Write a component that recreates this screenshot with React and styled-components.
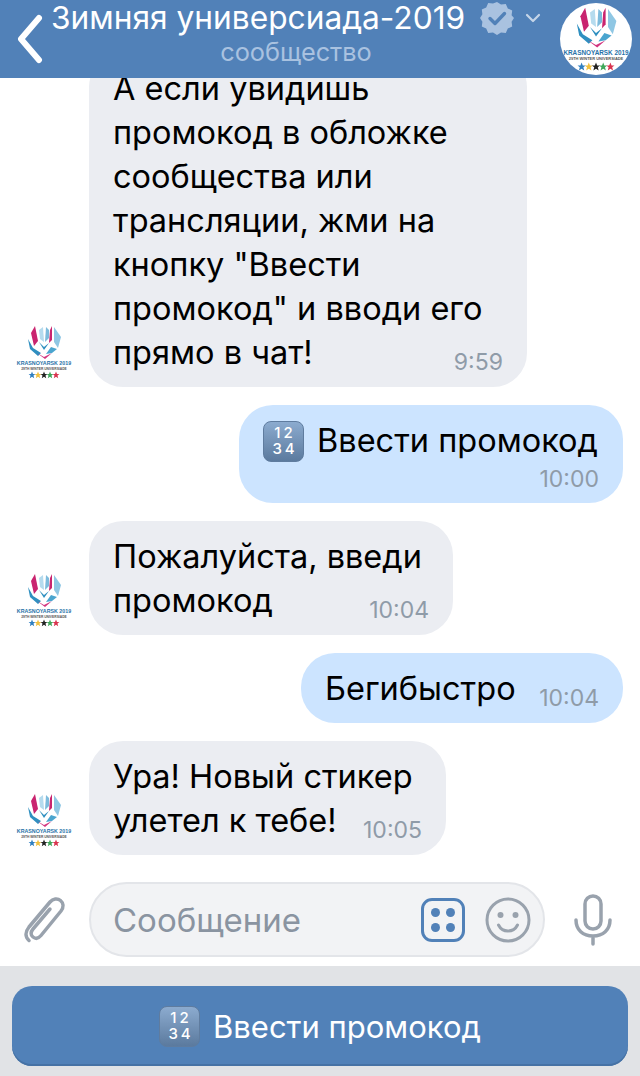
import React from "react";
import styled, { createGlobalStyle } from "styled-components";
import { ChevronDown } from "lucide-react";

const GlobalStyle = createGlobalStyle`
  html, body { margin: 0; padding: 0; background: #fff; }
  body { font-family: Inter, "Liberation Sans", Arial, sans-serif; }
`;

const Screen = styled.div`
  width: 640px;
  height: 1076px;
  display: flex;
  flex-direction: column;
  overflow: hidden;
  background: #fff;
`;

const Header = styled.header`
  height: 78px;
  flex: none;
  display: flex;
  align-items: center;
  background: #5181b8;
  color: #fff;
`;

const BackButton = styled.div`
  width: 51px;
  flex: none;
  display: flex;
  justify-content: center;
  padding-left: 9px;
  box-sizing: border-box;
`;

const TitleBlock = styled.div`
  width: 490px;
  height: 78px;
  flex: none;
  display: flex;
  flex-direction: column;
  align-items: center;
`;

const TitleRow = styled.div`
  align-self: flex-start;
  display: flex;
  align-items: center;
  height: 36px;
`;

const Title = styled.div`
  font-size: 31.7px;
  line-height: 36px;
  white-space: nowrap;
`;

const Subtitle = styled.div`
  font-size: 25.3px;
  line-height: 28px;
  margin-top: 2px;
  color: #a9c2e0;
`;

const HeaderLogo = styled.div`
  width: 72px;
  height: 72px;
  flex: none;
  border-radius: 50%;
  background: #fff;
  overflow: hidden;
  margin-left: 19px;
`;

const MessageList = styled.main`
  flex: 1;
  min-height: 0;
  display: flex;
  flex-direction: column;
  justify-content: flex-end;
  gap: 18px;
  padding-bottom: 27px;
  overflow: hidden;
`;

const Row = styled.div`
  flex: none;
  display: flex;
  align-items: flex-end;
  justify-content: ${({ $out }) => ($out ? "flex-end" : "flex-start")};
  padding: ${({ $out }) => ($out ? "0 17px 0 0" : "0 0 0 14px")};
`;

const Avatar = styled.div`
  width: 60px;
  height: 60px;
  flex: none;
  margin: 0 15px 5px 0;
`;

const Bubble = styled.div`
  width: ${({ $width }) => $width}px;
  box-sizing: border-box;
  padding: 14px 24px 12px;
  border-radius: 34px;
  background: ${({ $out }) => ($out ? "#cce4ff" : "#ebedf2")};
  color: #000;
  font-size: 32.5px;
  line-height: 44px;
`;

const Line = styled.div`
  display: flex;
  align-items: center;
  white-space: nowrap;
  height: 44px;
`;

const LastLine = styled(Line)`
  justify-content: space-between;
`;

const Time = styled.span`
  font-size: 23px;
  line-height: 26px;
  color: #8f9ba8;
  margin-top: 18px;
`;

const TimeLine = styled.div`
  text-align: right;
  height: 28px;
  padding-top: 2px;
  box-sizing: border-box;
  line-height: 28px;
  font-size: 23px;
  color: #8f9ba8;
`;

const Keycap = styled.span`
  width: 41px;
  height: 41px;
  flex: none;
  display: inline-flex;
  flex-direction: column;
  align-items: center;
  justify-content: center;
  gap: 2px;
  box-sizing: border-box;
  margin-right: 13px;
  border-radius: 8px;
  border: 1px solid #5f7c9f;
  background: linear-gradient(180deg, #8cabcf 0%, #5b7a9e 100%);
  color: #fff;
  font-size: 15px;
  line-height: 14px;
  font-weight: 500;
  letter-spacing: 3px;
  text-indent: 3px;
`;

const KeycapRow = styled.span`
  display: block;
  height: 14px;
`;

const Composer = styled.div`
  height: 84px;
  flex: none;
  display: flex;
  align-items: flex-start;
`;

const IconSlot = styled.div`
  width: ${({ $width }) => $width}px;
  height: 75px;
  flex: none;
  display: flex;
  align-items: center;
  justify-content: center;
`;

const InputField = styled.div`
  width: 456px;
  height: 75px;
  box-sizing: border-box;
  flex: none;
  display: flex;
  align-items: center;
  padding: 0 12px 0 22px;
  border: 2px solid #e3e5e9;
  border-radius: 38px;
  background: #f2f3f5;
`;

const Placeholder = styled.div`
  flex: 1;
  font-size: 33px;
  color: #8a94a1;
`;

const AppsButton = styled.div`
  width: 44px;
  height: 44px;
  margin-right: 20px;
  flex: none;
  display: grid;
  grid-template-columns: 9px 9px;
  gap: 6px;
  place-content: center;
  box-sizing: border-box;
  border: 3px solid #5181b8;
  border-radius: 11px;
`;

const AppsDot = styled.span`
  width: 9px;
  height: 9px;
  border-radius: 50%;
  background: #5181b8;
`;

const KeyboardPanel = styled.div`
  height: 110px;
  flex: none;
  box-sizing: border-box;
  padding: 20px 12px 10px;
  background: #e1e3e6;
`;

const KeyboardButton = styled.div`
  height: 80px;
  display: flex;
  align-items: center;
  justify-content: center;
  border-radius: 20px;
  background: #5181b8;
  box-shadow: inset 0 -2px 0 #4672a5;
  color: #fff;
  font-size: 31px;
`;

const BackIcon = () => (
  <svg width="26" height="50" viewBox="0 0 26 50" fill="none" stroke="#fff" strokeWidth="6" strokeLinecap="round" strokeLinejoin="round">
    <path d="M22 4L4 25l18 21" />
  </svg>
);

const VerifiedBadge = () => (
  <svg width="34" height="34" viewBox="0 0 34 34" style={{ marginLeft: 15 }}>
    <path
      fill="#a9c2e0"
      d="M17 1l4 2.600 4.800-.6 2 4.400 4.400 2-.6 4.800L34 17l-2.400 3.800.6 4.800-4.400 2-2 4.400-4.800-.6L17 34l-4-2.600-4.800.6-2-4.400-4.400-2 .6-4.800L0 17l2.400-3.800-.6-4.800 4.400-2 2-4.400 4.800.6z"
    />
    <path d="M10 17.500l5 5 9.500-10" fill="none" stroke="#5181b8" strokeWidth="3.400" strokeLinecap="round" strokeLinejoin="round" />
  </svg>
);

const starColors = ["#2f7fc1", "#f0c040", "#222", "#3fa85a", "#d9344f"];

const Star = ({ x, fill }) => (
  <polygon
    fill={fill}
    transform={`translate(${x} 53)`}
    points="0,-3.400 1,-1 3.400,-1 1.500,0.600 2.200,3.200 0,1.700 -2.200,3.200 -1.500,0.600 -3.400,-1 -1,-1"
  />
);

const UniversiadeLogo = () => (
  <svg width="100%" height="100%" viewBox="0 0 60 60">
    <polygon fill="#c9246f" points="17,11 21,4 24,19 20,24" />
    <polygon fill="#b5dbee" points="25,8 29,5 30,20 26,17" />
    <polygon fill="#7dbbdc" points="31,20 32,5 35,8 35,16" />
    <polygon fill="#c9246f" points="36,8 38,4 38,18 35,21" />
    <polygon fill="#8fc7e4" points="40,5 47,15 44,26 40,20" />
    <polygon fill="#2f8fc0" points="14,17 19,26 27,31 24,34 16,27" />
    <polygon fill="#d2367f" points="23,31 30,35 38,31 31,37" />
    <polygon fill="#4aa5cf" points="37,25 43,27 38,31 32,32" />
    <polygon fill="#2f8fc0" points="25,20 30,25 35,21 30,28" />
    <text x="30" y="43" textAnchor="middle" fontFamily="Liberation Sans" fontWeight="700" fontSize="5.300" fill="#2872a8">
      KRASNOYARSK 2019
    </text>
    <text x="30" y="47.500" textAnchor="middle" fontFamily="Liberation Sans" fontWeight="700" fontSize="3.300" fill="#555">
      29TH WINTER UNIVERSIADE
    </text>
    {starColors.map((c, i) => (
      <Star key={c} x={18 + i * 6} fill={c} />
    ))}
  </svg>
);

const PaperclipIcon = () => (
  <svg width="44" height="50" viewBox="0 0 44 50" fill="none" stroke="#99a2ad" strokeWidth="3.500" strokeLinecap="round" strokeLinejoin="round">
    <path d="M27 14L10 34c-2.500 3-2.500 6 0 8s5.500 1.500 8-1.500L38 16c3-4 2.500-8-.5-10.500S30 3.500 27 7L6 32c-4 5-4 10 0 13.500" />
  </svg>
);

const SmileIcon = () => (
  <svg width="46" height="46" viewBox="0 0 46 46" fill="none" stroke="#99a2ad" strokeWidth="3" strokeLinecap="round">
    <circle cx="23" cy="23" r="21" />
    <circle cx="15.500" cy="18" r="3" fill="#99a2ad" stroke="none" />
    <circle cx="30.500" cy="18" r="3" fill="#99a2ad" stroke="none" />
    <path d="M13.500 28c2 4 5.500 6 9.500 6s7.500-2 9.500-6" />
  </svg>
);

const MicIcon = () => (
  <svg width="40" height="52" viewBox="0 0 40 52" fill="none" stroke="#99a2ad" strokeWidth="3.500" strokeLinecap="round">
    <rect x="12" y="2" width="16" height="33" rx="8" />
    <path d="M3 26c0 10 7 16 17 16s17-6 17-16M20 42v8" />
  </svg>
);

const KeycapDigits = () => (
  <Keycap>
    <KeycapRow>12</KeycapRow>
    <KeycapRow>34</KeycapRow>
  </Keycap>
);

const Message = ({ lines, time, width }) => (
  <Row>
    <Avatar>
      <UniversiadeLogo />
    </Avatar>
    <Bubble $width={width}>
      {lines.slice(0, -1).map((l) => (
        <Line key={l}>{l}</Line>
      ))}
      <LastLine>
        {lines[lines.length - 1]}
        <Time>{time}</Time>
      </LastLine>
    </Bubble>
  </Row>
);

const App = () => (
  <Screen>
    <GlobalStyle />
    <Header>
      <BackButton>
        <BackIcon />
      </BackButton>
      <TitleBlock>
        <TitleRow>
          <Title>Зимняя универсиада-2019</Title>
          <VerifiedBadge />
          <ChevronDown size={24} strokeWidth={2.2} color="#c5d5e8" style={{ marginLeft: 7 }} />
        </TitleRow>
        <Subtitle>сообщество</Subtitle>
      </TitleBlock>
      <HeaderLogo>
        <UniversiadeLogo />
      </HeaderLogo>
    </Header>

    <MessageList>
      <Message
        width={438}
        time="9:59"
        lines={[
          "А если увидишь",
          "промокод в обложке",
          "сообщества или",
          "трансляции, жми на",
          'кнопку "Ввести',
          'промокод" и вводи его',
          "прямо в чат!",
        ]}
      />
      <Row $out>
        <Bubble $out $width={384}>
          <Line>
            <KeycapDigits />
            Ввести промокод
          </Line>
          <TimeLine>10:00</TimeLine>
        </Bubble>
      </Row>
      <Message width={364} time="10:04" lines={["Пожалуйста, введи", "промокод"]} />
      <Row $out>
        <Bubble $out $width={322}>
          <LastLine>
            Бегибыстро
            <Time>10:04</Time>
          </LastLine>
        </Bubble>
      </Row>
      <Message width={357} time="10:05" lines={["Ура! Новый стикер", "улетел к тебе!"]} />
    </MessageList>

    <Composer>
      <IconSlot $width={89}>
        <PaperclipIcon />
      </IconSlot>
      <InputField>
        <Placeholder>Сообщение</Placeholder>
        <AppsButton>
          <AppsDot />
          <AppsDot />
          <AppsDot />
          <AppsDot />
        </AppsButton>
        <SmileIcon />
      </InputField>
      <IconSlot $width={95}>
        <MicIcon />
      </IconSlot>
    </Composer>

    <KeyboardPanel>
      <KeyboardButton>
        <KeycapDigits />
        Ввести промокод
      </KeyboardButton>
    </KeyboardPanel>
  </Screen>
);

export default App;
